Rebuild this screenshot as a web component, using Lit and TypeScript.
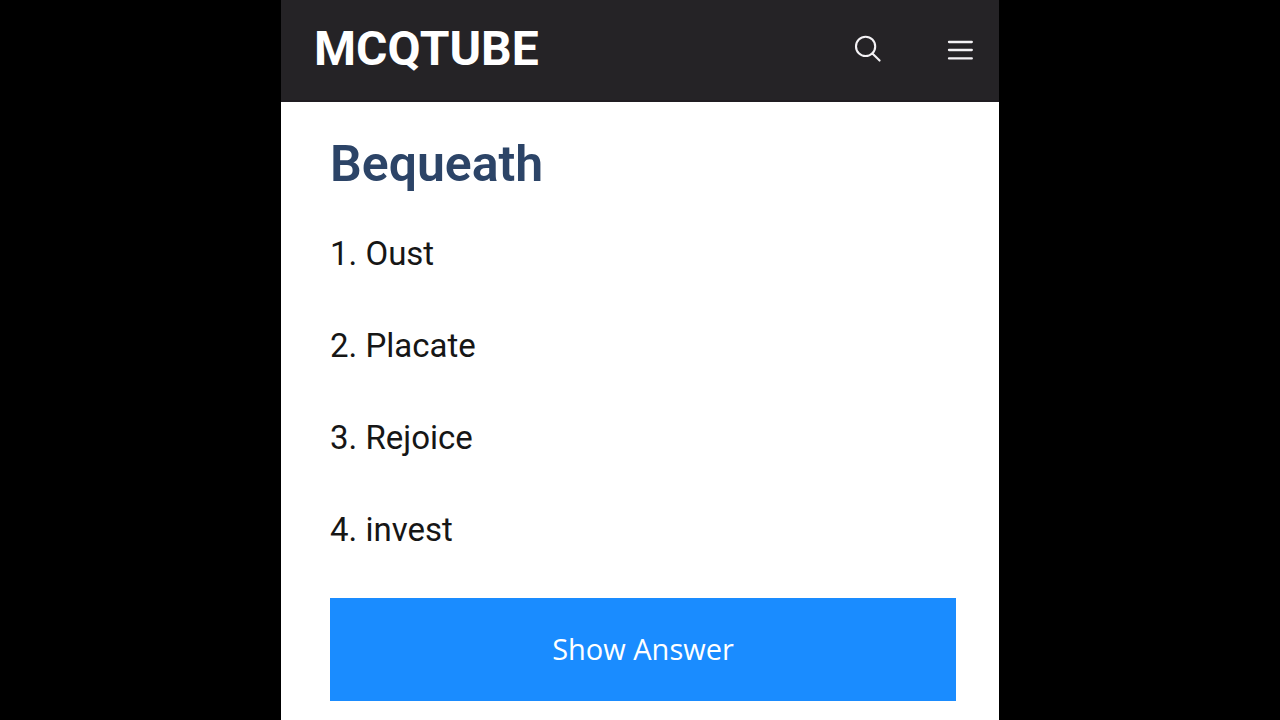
import { LitElement, html, css } from "lit";
import { customElement, property, state } from "lit/decorators.js";

@customElement("site-header")
class SiteHeader extends LitElement {
  static styles = css`
    :host {
      display: block;
    }
    .bar {
      display: flex;
      align-items: center;
      gap: 60px;
      box-sizing: border-box;
      min-height: 102px;
      padding: 0 23px 2px 33px;
      background: #252326;
      border-bottom: 2px solid #201d22;
    }
    .brand {
      margin-right: auto;
      color: #fff;
      font-size: 48px;
      line-height: 56px;
      font-weight: 700;
      text-decoration: none;
    }
    .icon {
      display: block;
      padding: 0;
      border: 0;
      background: none;
      color: #f4f2f5;
      cursor: pointer;
    }
    .icon svg {
      display: block;
    }
  `;

  render() {
    return html`
      <header class="bar">
        <a class="brand" href="#">MCQTUBE</a>
        <button class="icon" aria-label="Search">
          <svg width="32" height="32" viewBox="0 0 32 32" fill="none" stroke="currentColor" stroke-width="2.1" stroke-linecap="round">
            <circle cx="13.6" cy="13.4" r="9.6" />
            <path d="M20.4 20.4 27.6 27.6" />
          </svg>
        </button>
        <button class="icon" aria-label="Menu">
          <svg width="32" height="32" viewBox="0 0 32 32" fill="none" stroke="currentColor" stroke-width="2.3" stroke-linecap="round">
            <path d="M5 9h22.8M5 17h22.8M5 25.4h22.8" />
          </svg>
        </button>
      </header>
    `;
  }
}

@customElement("quiz-question")
class QuizQuestion extends LitElement {
  static styles = css`
    :host {
      display: block;
    }
    .question {
      padding: 34px 43px 18px 49px;
    }
    .word {
      margin: 0 0 37px;
      color: #2c4467;
      font-size: 50px;
      line-height: 56px;
      font-weight: 600;
    }
    .option {
      margin: 0 0 42px;
      font-size: 33px;
      line-height: 50px;
    }
    .answer {
      display: block;
      width: 100%;
      margin: 43px 0 0;
      padding: 31px 16px 32px;
      border: 0;
      background: #1a8cff;
      color: #fff;
      font-family: "Open Sans", sans-serif;
      font-size: 29px;
      line-height: 40px;
      cursor: pointer;
    }
  `;

  @property() word = "";
  @property({ attribute: false }) options: string[] = [];

  render() {
    return html`
      <section class="question">
        <h2 class="word">${this.word}</h2>
        ${this.options.map((option, i) => html`<p class="option">${i + 1}. ${option}</p>`)}
        <button class="answer">Show Answer</button>
      </section>
    `;
  }
}

@customElement("app-root")
class AppRoot extends LitElement {
  static styles = css`
    :host {
      display: flex;
      justify-content: center;
      min-height: 100vh;
      background: #000;
      font-family: Roboto, sans-serif;
      color: #161616;
    }
    .page {
      width: 100%;
      max-width: 718px;
      background: #fff;
    }
  `;

  @state() private options = ["Oust", "Placate", "Rejoice", "invest"];

  render() {
    return html`
      <main class="page">
        <site-header></site-header>
        <quiz-question word="Bequeath" .options=${this.options}></quiz-question>
      </main>
    `;
  }
}
